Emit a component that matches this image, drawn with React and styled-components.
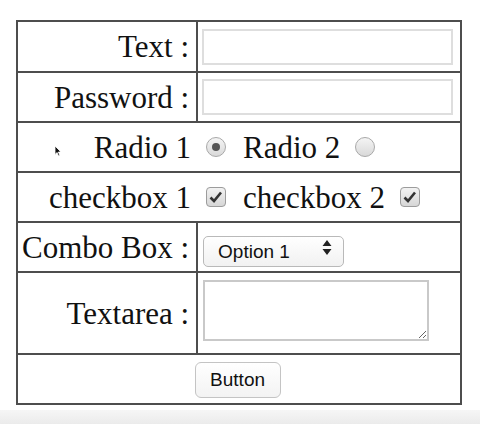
import React from 'react';
import styled, { createGlobalStyle } from 'styled-components';

const Global = createGlobalStyle`
  html, body { margin: 0; padding: 0; background: #fff; }
  body { font-family: "Liberation Serif", "Times New Roman", serif; color: #111; }
`;

const Page = styled.div`
  width: 480px;
  height: 424px;
  display: flex;
  flex-direction: column;
  position: relative;
  overflow: hidden;
`;

const Stage = styled.div`
  flex: 1;
  padding: 20px 0 0 16px;
`;

const Bottom = styled.div`
  height: 14px;
  background: linear-gradient(#f6f6f6, #ebebeb);
`;

const Table = styled.table`
  border-collapse: collapse;
  width: 445px;
  border: 2px solid #4d4d4d;
  font-size: 31px;
  line-height: 1;
`;

const Cell = styled.td`
  border: 2px solid #4d4d4d;
  height: ${({ $h }) => $h || 48}px;
  padding: 0 7px 0 4px;
  text-align: ${({ $align }) => $align || 'left'};
  vertical-align: middle;
  white-space: nowrap;
  width: ${({ $w }) => ($w ? `${$w}px` : 'auto')};
`;

const TextInput = styled.input`
  display: block;
  box-sizing: border-box;
  width: 251px;
  height: 36px;
  margin-left: 0;
  border: 2px solid #dedede;
  background: #fff;
  outline: none;
`;

const Line = styled.div`
  display: flex;
  align-items: center;
  justify-content: center;
  padding-right: 6px;
`;

const Choice = styled.label`
  display: flex;
  align-items: center;
  gap: 15px;
  margin-right: ${({ $last }) => ($last ? 0 : 17)}px;
`;

const Radio = styled.span`
  box-sizing: border-box;
  width: 20px;
  height: 20px;
  border-radius: 50%;
  border: 1px solid #a9a9a9;
  background: linear-gradient(#f4f4f4, #d9d9d9);
  display: flex;
  align-items: center;
  justify-content: center;
  &::after {
    content: '';
    width: 8px;
    height: 8px;
    border-radius: 50%;
    background: #555;
    display: ${({ $on }) => ($on ? 'block' : 'none')};
  }
`;

const Check = styled.span`
  box-sizing: border-box;
  width: 20px;
  height: 20px;
  border-radius: 4px;
  border: 1px solid #9c9c9c;
  background: linear-gradient(#f2f2f2, #d6d6d6);
  display: flex;
  align-items: center;
  justify-content: center;
`;

const SelectWrap = styled.div`
  position: relative;
  width: 141px;
  height: 31px;
  margin-left: 1px;
`;

const Select = styled.select`
  appearance: none;
  width: 100%;
  height: 100%;
  box-sizing: border-box;
  border: 1px solid #b9b9b9;
  border-radius: 5px;
  background: linear-gradient(#ffffff, #f1f1f1);
  font-family: "Liberation Sans", Arial, sans-serif;
  font-size: 19px;
  color: #111;
  padding: 0 0 0 14px;
  outline: none;
`;

const Arrows = styled.svg`
  position: absolute;
  right: 12px;
  top: 8px;
  pointer-events: none;
`;

const Area = styled.textarea`
  display: block;
  box-sizing: border-box;
  width: 226px;
  height: 61px;
  margin: 0 0 5px 1px;
  border: 2px solid #c9c9c9;
  resize: both;
  outline: none;
`;

const Button = styled.button`
  box-sizing: border-box;
  width: 86px;
  height: 36px;
  border: 1px solid #c4c4c4;
  border-radius: 6px;
  background: linear-gradient(#ffffff, #f3f3f3);
  font-family: "Liberation Sans", Arial, sans-serif;
  font-size: 19px;
  color: #111;
  padding: 0;
`;

const Pointer = styled.svg`
  position: absolute;
  left: 54px;
  top: 145px;
`;

const Tick = () => (
  <svg width="14" height="12" viewBox="0 0 14 12">
    <path d="M1.5 6.5 L5 10 L12 1.5" fill="none" stroke="#333" strokeWidth="2.6" />
  </svg>
);

export default function App() {
  return (
    <Page>
      <Global />
      <Stage>
        <Table>
          <tbody>
            <tr>
              <Cell $align="right" $w={168} $h={49}>Text :</Cell>
              <Cell $h={49}><TextInput type="text" /></Cell>
            </tr>
            <tr>
              <Cell $align="right">Password :</Cell>
              <Cell><TextInput type="password" /></Cell>
            </tr>
            <tr>
              <Cell colSpan={2}>
                <Line>
                  <Choice>Radio 1 <Radio $on /></Choice>
                  <Choice $last>Radio 2 <Radio /></Choice>
                </Line>
              </Cell>
            </tr>
            <tr>
              <Cell colSpan={2}>
                <Line>
                  <Choice>checkbox 1 <Check><Tick /></Check></Choice>
                  <Choice $last>checkbox 2 <Check><Tick /></Check></Choice>
                </Line>
              </Cell>
            </tr>
            <tr>
              <Cell $align="right">Combo Box :</Cell>
              <Cell>
                <SelectWrap>
                  <Select defaultValue="1">
                    <option value="1">Option 1</option>
                    <option value="2">Option 2</option>
                  </Select>
                  <Arrows width="10" height="15" viewBox="0 0 10 15">
                    <path d="M5 0 L9.5 6 L0.5 6 Z M0.5 9 L9.5 9 L5 15 Z" fill="#222" />
                  </Arrows>
                </SelectWrap>
              </Cell>
            </tr>
            <tr>
              <Cell $align="right" $h={80}>Textarea :</Cell>
              <Cell $h={80}><Area /></Cell>
            </tr>
            <tr>
              <Cell colSpan={2} $align="center" $h={48}>
                <Button>Button</Button>
              </Cell>
            </tr>
          </tbody>
        </Table>
      </Stage>
      <Bottom />
      <Pointer width="8" height="12" viewBox="0 0 8 12">
        <path d="M1 1 L1 9.5 L3 7.5 L4.5 11 L5.8 10.4 L4.4 7 L7 7 Z" fill="#111" stroke="#fff" strokeWidth="0.8" />
      </Pointer>
    </Page>
  );
}
